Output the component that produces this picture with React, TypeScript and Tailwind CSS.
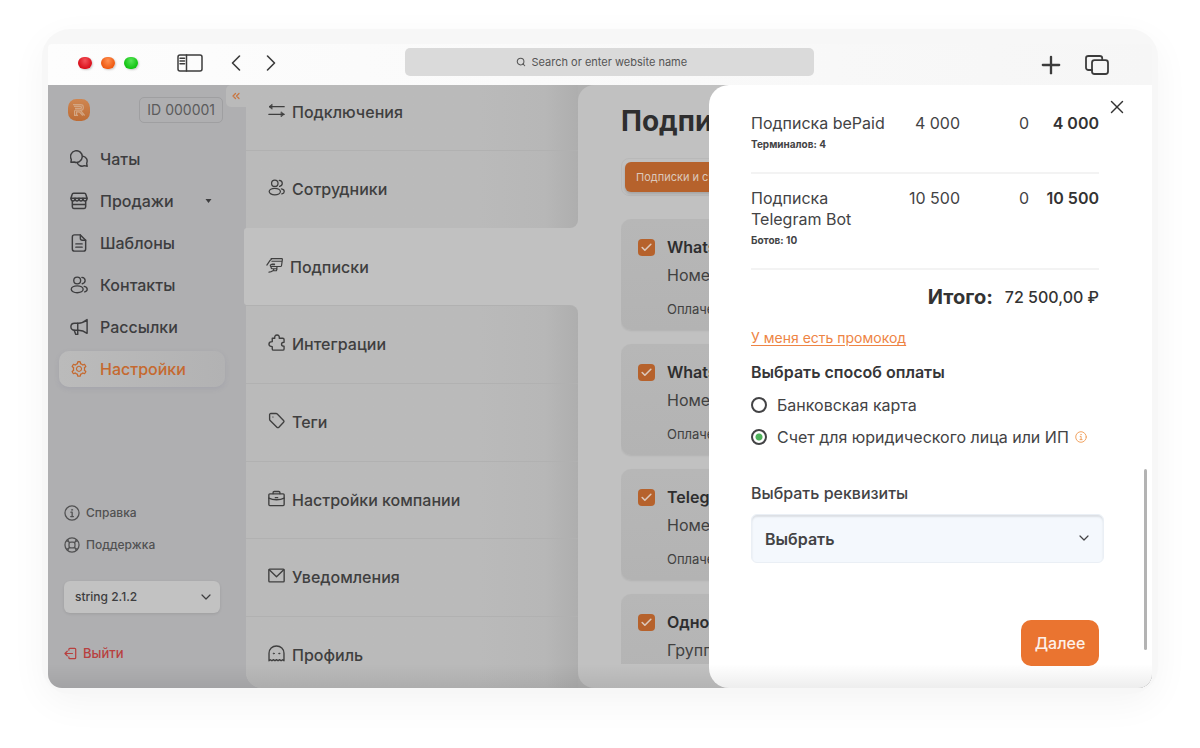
import React from "react";
import { ChevronLeft, ChevronRight, ChevronDown, Plus, X, ChevronsLeft, Check, Search } from "lucide-react";
import { AiOutlineSetting } from "react-icons/ai";

type IconProps = { className?: string };

const Line = ({
  className,
  strokeWidth = 1.6,
  viewBox = "0 0 20 20",
  children,
}: IconProps & { strokeWidth?: number; viewBox?: string; children: React.ReactNode }) => (
  <svg
    className={className}
    viewBox={viewBox}
    fill="none"
    stroke="currentColor"
    strokeWidth={strokeWidth}
    strokeLinecap="round"
    strokeLinejoin="round"
    aria-hidden="true"
  >
    {children}
  </svg>
);

const ChatsIcon = ({ className }: IconProps) => (
  <Line className={className}>
    <path d="M1 13.600l.5-3A6.500 6.500 0 1 1 4.600 13.300z" />
    <path d="M14.200 6.800a5.600 5.600 0 0 1 4.300 7.900l.6 3.400-3.200-.7A5.700 5.700 0 0 1 8 14" />
  </Line>
);

const StoreIcon = ({ className }: IconProps) => (
  <Line className={className} strokeWidth={1.7}>
    <path d="M4 1.500h12c.9 0 1.500.5 1.700 1.300l1.200 4.200H1.100l1.200-4.200C2.500 2 3.100 1.500 4 1.500z" />
    <path d="M1.100 7c0 4 4.500 4 4.500 0 0 4 4.400 4 4.400 0 0 4 4.400 4 4.400 0 0 4 4.500 4 4.500 0" />
    <path d="M2.600 10.500v6c0 1 .6 1.900 1.600 1.900h11.600c1 0 1.600-.9 1.600-1.900v-6M3 14h14" />
  </Line>
);

const DocumentIcon = ({ className }: IconProps) => (
  <Line className={className}>
    <path d="M11.500 1H5C3.600 1 2.600 2 2.600 3.400v13.200C2.600 18 3.600 19 5 19h10c1.400 0 2.400-1 2.400-2.400V7z" />
    <path d="M11.500 1v3.800c0 1.300.9 2.200 2.200 2.200h3.700M6.500 11h7M6.500 14.600h7" />
  </Line>
);

const UsersIcon = ({ className }: IconProps) => (
  <Line className={className} strokeWidth={1.5}>
    <circle cx="8" cy="5" r="3.800" />
    <ellipse cx="8" cy="14.800" rx="6.600" ry="3.800" />
    <path d="M13.200 1.600c2.200.2 3.600 1.600 3.600 3.500s-1.300 3.200-3.200 3.500M15.800 11.600c2.100.4 3.300 1.500 3.300 3s-1 2.500-2.800 3" />
  </Line>
);

const MegaphoneIcon = ({ className }: IconProps) => (
  <Line className={className}>
    <path d="M19 1.800v15.200c-3-2.200-6-3.400-9.600-3.400H5C2.600 13.600 1 12 1 9.700S2.600 5.800 5 5.800h4.400c3.600 0 6.600-1.500 9.600-4z" />
    <path d="M8.600 5.800v12.400H6.400l-1.800-4.600" />
  </Line>
);

const SwapIcon = ({ className }: IconProps) => (
  <Line className={className}>
    <path d="M19 5.500H2M19 14.500H1" />
    <path d="M4.500 2.800 1.200 5.500l3.300 2.700zM15.700 11.800l3.300 2.700-3.300 2.700z" fill="currentColor" strokeWidth={0.8} />
  </Line>
);

const CardHandIcon = ({ className }: IconProps) => (
  <Line className={className} strokeWidth={1.4}>
    <path d="M6 2h12.500c.5 0 .8.300.8.800l-1 7.200c-.1.700-.6 1.200-1.300 1.200h-4.600M7 5h12M7 8.200h3M1 9.500l4-5.800 1.200-.7" />
    <path d="M12.400 11.200H6.200C4.600 11.200 4.700 9 6.200 9H10M7 11.200c-1.700.300-1.300 2.600.5 2.600h5l.6-2.600M9 13.800v2.400h3.200l.8-2.400M3.500 17.800c2 0 3-.4 4.500-1.600" />
  </Line>
);

const PuzzleIcon = ({ className }: IconProps) => (
  <Line className={className}>
    <path d="M5 5h3c-.5-2.200.6-3.800 2.600-3.800S13.700 2.800 13.200 5h4.200c.9 0 1.500.6 1.500 1.500v3.200c-2 .1-3 1-3 2.300s1 2.300 3 2.300v3.200c0 .8-.6 1.400-1.500 1.400H6.500c-.9 0-1.500-.6-1.500-1.400v-2.600c-2.400 0-3.900-1.100-3.900-2.900S2.600 9 5 9z" />
  </Line>
);

const TagIcon = ({ className }: IconProps) => (
  <Line className={className}>
    <path d="M3.300 1.800h6.200c.6 0 1 .2 1.400.6l7.400 7.500c.7.700.7 1.500 0 2.200l-5.500 5.800c-.7.700-1.600.7-2.300 0l-8-8c-.4-.4-.6-.9-.6-1.400V3.200c0-.8.600-1.400 1.400-1.400z" />
    <path d="M5.600 5.800h.4" strokeWidth={1.200} />
  </Line>
);

const BriefcaseIcon = ({ className }: IconProps) => (
  <Line className={className}>
    <rect x="1" y="4.500" width="18" height="13.800" rx="1.200" />
    <path d="M6 4.300V3c0-.8.500-1.300 1.300-1.300h5.400c.8 0 1.300.5 1.300 1.300v1.300M1 9.500c5 2.600 13 2.600 18 0M8.600 9h2.800" />
  </Line>
);

const MailIcon = ({ className }: IconProps) => (
  <Line className={className}>
    <rect x="1" y="2.500" width="18" height="15" rx="1" />
    <path d="M1.500 3.200 10 11.500l8.500-8.300" />
  </Line>
);

const GhostIcon = ({ className }: IconProps) => (
  <Line className={className}>
    <path d="M1.200 18.600V9.800C1.200 4.800 5 1.200 10 1.200s8.800 3.600 8.800 8.600v8.800l-1.700-1.200-1.700 1.200-1.800-1.400-1.800 1.400-1.800-1.400-1.800 1.400-1.800-1.400-1.800 1.400-1.700-1.200z" />
    <circle cx="6.800" cy="10" r=".7" fill="currentColor" strokeWidth={0.8} />
    <circle cx="13.200" cy="10" r=".7" fill="currentColor" strokeWidth={0.8} />
  </Line>
);

const InfoIcon = ({ className }: IconProps) => (
  <Line className={className}>
    <circle cx="10" cy="10" r="8.800" />
    <circle cx="10" cy="6" r=".8" fill="currentColor" strokeWidth={0.6} />
    <path d="M8.600 9h1.600v5.200M8.400 14.400h3.400" />
  </Line>
);

const SupportIcon = ({ className }: IconProps) => (
  <Line className={className}>
    <circle cx="10" cy="10" r="8.800" />
    <rect x="6.300" y="6.300" width="7.400" height="7.400" rx="2.400" />
    <path d="M6.800 6.800 4.600 3.300M6.800 6.800 3.300 4.600M13.200 6.800l2.200-3.500M13.200 6.800l3.500-2.200M6.800 13.200l-2.200 3.500M6.800 13.200l-3.500 2.200M13.200 13.200l2.200 3.500M13.200 13.200l3.500 2.200" strokeWidth={1.3} />
  </Line>
);

const LogoutIcon = ({ className }: IconProps) => (
  <Line className={className} strokeWidth={1.9}>
    <path d="M7.500 5V3.500c0-.8.700-1.500 1.500-1.500h7.500c.8 0 1.500.7 1.500 1.500v13c0 .8-.7 1.500-1.500 1.500H9c-.8 0-1.500-.7-1.500-1.500V15M13 10H1.500M5 6.500 1.500 10 5 13.500" />
  </Line>
);

const PanelIcon = ({ className }: IconProps) => (
  <Line className={className} viewBox="0 0 26 18" strokeWidth={1.5}>
    <rect x="1" y="1" width="24" height="16" rx="2" />
    <path d="M9.500 1v16M3 4.300h4.500M3 7h4.500M3 9.700h4.500" />
  </Line>
);

const TabsIcon = ({ className }: IconProps) => (
  <Line className={className} viewBox="0 0 24 20" strokeWidth={1.8}>
    <rect x="7" y="5.200" width="16" height="13.800" rx="2.500" />
    <path d="M7 15H3.500C2 15 1 14 1 12.800V3.200C1 2 2 1 3.500 1h11.300c1.400 0 2.300.8 2.400 2v2" />
  </Line>
);

const Logo = () => (
  <svg className="size-[22px]" viewBox="0 0 22 22" role="img" aria-label="Логотип">
    <defs>
      <linearGradient id="brand" x1="0" y1="0" x2="0" y2="1">
        <stop offset="0" stopColor="#cf8651" />
        <stop offset="1" stopColor="#bd6c35" />
      </linearGradient>
    </defs>
    <rect width="22" height="22" rx="8.500" fill="url(#brand)" />
    <g fill="none" stroke="#d3a582" strokeWidth="1.200">
      <path d="M5 5.600h7.600c3.700 0 3.700 5.600 0 5.600H7M6 7.400h6.500c1.400 0 1.400 2 0 2H7M6.600 16.500v-5.300M8.600 16.500v-3.600h2.800l3.400 3.600M12.600 11.600l4 4.900M6 16.400h4" />
    </g>
  </svg>
);

const navItems = [
  { label: "Чаты", Icon: ChatsIcon },
  { label: "Продажи", Icon: StoreIcon, caret: true },
  { label: "Шаблоны", Icon: DocumentIcon },
  { label: "Контакты", Icon: UsersIcon },
  { label: "Рассылки", Icon: MegaphoneIcon },
  { label: "Настройки", Icon: AiOutlineSetting, active: true },
];

const settingsItems = [
  { label: "Подключения", Icon: SwapIcon, row: "pt-[15px]" },
  { label: "Сотрудники", Icon: UsersIcon, row: "pt-[26px] rounded-br-lg border-t" },
  { label: "Подписки", Icon: CardHandIcon, active: true },
  { label: "Интеграции", Icon: PuzzleIcon, row: "pt-[26px] rounded-tr-lg border-t" },
  { label: "Теги", Icon: TagIcon, row: "pt-[26px] border-t" },
  { label: "Настройки компании", Icon: BriefcaseIcon, row: "pt-[26px] border-t" },
  { label: "Уведомления", Icon: MailIcon, row: "pt-[26px] border-t" },
  { label: "Профиль", Icon: GhostIcon, row: "pt-[26px] rounded-bl-[16px] border-t" },
];

const cards = [
  { title: "WhatsApp", line: "Номер", paid: "Оплачено" },
  { title: "WhatsApp", line: "Номер", paid: "Оплачено" },
  { title: "Telegram", line: "Номер", paid: "Оплачено" },
  { title: "Одноклассники", line: "Группа" },
];

const orderRows = [
  { name: "Подписка bePaid", note: "Терминалов: 4", price: "4 000", discount: "0", total: "4 000" },
  { name: "Подписка Telegram Bot", note: "Ботов: 10", price: "10 500", discount: "0", total: "10 500" },
];

function Toolbar() {
  return (
    <header className="flex h-[41px] items-center rounded-t-sm bg-linear-to-r from-[#fdfdfd] to-[#f6f6f6] pb-[5px] text-[#3c3c3c]">
      <div className="flex w-[357px] shrink-0 items-center pt-[2px] pl-[30px]">
        <div className="flex gap-[9px]">
          <span className="h-3 w-[14px] rounded-full bg-radial-[at_50%_30%] from-[#f4525a] to-[#d9101c] to-70% shadow-[1px_1px_2px_rgba(0,0,0,0.2)]" />
          <span className="h-3 w-[14px] rounded-full bg-radial-[at_50%_30%] from-[#ff9052] to-[#ee5a12] to-70% shadow-[1px_1px_2px_rgba(0,0,0,0.2)]" />
          <span className="h-3 w-[14px] rounded-full bg-radial-[at_50%_30%] from-[#58e558] to-[#12c312] to-70% shadow-[1px_1px_2px_rgba(0,0,0,0.2)]" />
        </div>
        <button aria-label="Боковая панель" className="ml-[39px]">
          <PanelIcon className="h-[18px] w-[26px]" />
        </button>
        <button aria-label="Назад" className="ml-[19px]">
          <ChevronLeft className="size-7" strokeWidth={1.4} />
        </button>
        <button aria-label="Вперёд" className="ml-[7px]">
          <ChevronRight className="size-7" strokeWidth={1.4} />
        </button>
      </div>
      <label className="flex h-7 min-w-0 flex-1 items-center justify-center gap-[6px] rounded-[5px] bg-[#dadada]">
        <Search className="size-[10px] text-[#555]" strokeWidth={2.5} />
        <input
          aria-label="Адрес"
          placeholder="Search or enter website name"
          className="w-[172px] bg-transparent text-[11px] outline-none placeholder:text-[#555]"
        />
      </label>
      <div className="flex w-[338px] shrink-0 items-center justify-end gap-[20px] pt-[6px] pr-[43px]">
        <button aria-label="Новая вкладка">
          <Plus className="size-[28px]" strokeWidth={2} />
        </button>
        <button aria-label="Вкладки">
          <TabsIcon className="h-5 w-6" />
        </button>
      </div>
    </header>
  );
}

function Sidebar() {
  return (
    <aside className="flex w-[198px] shrink-0 flex-col text-[#3d3d3f]">
      <div className="flex items-start justify-between pl-5">
        <div className="flex flex-1 items-center justify-between pt-3 pr-[3px]">
          <Logo />
          <span className="rounded-[5px] border border-[#9f9fa1] px-[7px] py-[2px] text-sm leading-5 text-[#5b5b5c]">
            ID 000001
          </span>
        </div>
        <button
          aria-label="Свернуть меню"
          className="flex h-[22px] w-5 items-center justify-center rounded-l-[5px] bg-[#bababa] text-[#c97641]"
        >
          <ChevronsLeft className="size-3" strokeWidth={2.5} />
        </button>
      </div>
      <nav className="mt-[18px] flex flex-col gap-[6px] pr-[21px] pl-[11px]">
        {navItems.map(({ label, Icon, caret, active }) => (
          <a
            key={label}
            href="#"
            className={
              active
                ? "flex h-9 items-center gap-3 rounded-[10px] bg-linear-to-r from-[#bbbbbb] to-[#b2b2b3] pl-[11px] font-medium text-[#c5692f] shadow-[0_2px_5px_rgba(110,110,140,0.15)]"
                : "flex h-9 items-center gap-3 pl-[11px] font-medium"
            }
          >
            <Icon className="size-[18px] shrink-0" />
            {label}
            {caret && (
              <svg className="ml-auto mr-[13px] h-1 w-[7px]" viewBox="0 0 7 4" aria-hidden="true">
                <path d="M.5 0h6L3.500 4z" fill="currentColor" />
              </svg>
            )}
          </a>
        ))}
      </nav>
      <div className="mt-auto flex flex-col items-start pl-4 text-xs font-medium">
        <a href="#" className="flex items-center gap-[6px] text-[#515152]">
          <InfoIcon className="size-4" />
          Справка
        </a>
        <a href="#" className="mt-4 flex items-center gap-[6px] text-[#515152]">
          <SupportIcon className="size-4" />
          Поддержка
        </a>
        <div className="relative mt-7 w-[156px]">
          <select
            aria-label="Версия"
            className="h-8 w-full appearance-none rounded-md bg-[#c2c2c2] px-[11px] shadow-[0_1px_3px_rgba(0,0,0,0.1)]"
          >
            <option>string 2.1.2</option>
          </select>
          <ChevronDown className="pointer-events-none absolute top-2 right-[6px] size-4" strokeWidth={1.8} />
        </div>
        <a href="#" className="mt-8 mb-[27px] flex items-center gap-[6px] text-[13px] leading-4 text-[#b8403f]">
          <LogoutIcon className="size-[13px]" />
          Выйти
        </a>
      </div>
    </aside>
  );
}

function SettingsMenu() {
  return (
    <nav className="grid w-[332px] shrink-0 grid-rows-[65px_repeat(6,1fr)_72px] rounded-bl-[16px] bg-[#c1c1c1] font-medium text-[#3f3f3f]">
      {settingsItems.map(({ label, Icon, row, active }) => (
        <a
          key={label}
          href="#"
          className={
            active
              ? "-ml-[2px] flex items-start gap-[7px] rounded-l-[3px] bg-[#c1c1c1] pt-[27px] pl-[22px]"
              : `flex items-start gap-[7px] border-[#b1b1b1] bg-linear-to-r from-[#bababa] from-70% via-[#b7b7b7] via-90% to-[#aeaeae] pl-[22px] ${row}`
          }
        >
          <Icon className="mt-[2px] size-[17px] shrink-0" />
          <span className="leading-6">{label}</span>
        </a>
      ))}
    </nav>
  );
}

function Subscriptions() {
  return (
    <div className="flex min-w-0 flex-1 bg-[#b0b0b0]">
      <main className="flex min-w-0 flex-1 flex-col overflow-hidden rounded-l-[16px] bg-[#c1c1c1] pt-[18px] pr-6 pb-6 pl-[43px] text-[#2e2e2f]">
        <h1 className="text-[28px] leading-9 font-bold">Подписки</h1>
        <div className="mt-[19px] flex shrink-0 rounded-lg border border-[#b9b9b9] p-[3px]">
          <button className="h-[30px] rounded-md bg-[#b6622c] px-[11px] text-[11px] text-[#dcc8bb] shadow-[0_2px_3px_rgba(0,0,0,0.15)]">
            Подписки и счета
          </button>
        </div>
        <div className="mt-[23px] flex min-h-0 flex-1 flex-col gap-[14px] overflow-hidden">
          {cards.map((card, i) => (
            <label
              key={i}
              className="flex h-[111px] shrink-0 gap-3 rounded-[10px] bg-linear-to-b from-[#b7b7b7] to-[#b3b3b3] px-[17px] pt-4 shadow-[0_1px_2px_rgba(0,0,0,0.08)]"
            >
              <span className="relative mt-1 size-[17px] shrink-0">
                <input
                  type="checkbox"
                  defaultChecked
                  className="block size-[17px] appearance-none rounded-[4px] bg-[#b6622c]"
                />
                <Check
                  className="pointer-events-none absolute top-[2px] left-[2px] size-[13px] text-[#dcc8bb]"
                  strokeWidth={3}
                />
              </span>
              <span className="flex flex-col">
                <span className="leading-6 font-semibold">{card.title}</span>
                <span className="mt-1 leading-6 text-[#414141]">{card.line}</span>
                {card.paid && <span className="mt-3 text-[13px] leading-5 text-[#414141]">{card.paid}</span>}
              </span>
            </label>
          ))}
        </div>
      </main>
    </div>
  );
}

function PaymentDrawer() {
  return (
    <section className="absolute inset-y-0 right-0 flex w-[443px] flex-col rounded-l-[20px] bg-white pt-[14px] pr-[53px] pl-[42px] text-[#434345]">
      <button aria-label="Закрыть" className="absolute top-[11px] right-[24px] text-[#333]">
        <X className="size-[22px]" strokeWidth={1.6} />
      </button>
      <table className="w-full table-fixed">
        <tbody>
          {orderRows.map((r) => (
            <tr key={r.name} className="border-b-2 border-[#f3f3f3] align-top leading-[21px]">
              <td className="w-[139px] pt-[14px] pb-[17px]">
                {r.name}
                <div className="text-[10px] leading-[21px] font-bold">{r.note}</div>
              </td>
              <td className="w-[70px] pt-[14px] text-right">{r.price}</td>
              <td className="w-[69px] pt-[14px] text-right">{r.discount}</td>
              <td className="pt-[14px] text-right font-semibold text-[#333]">{r.total}</td>
            </tr>
          ))}
        </tbody>
      </table>
      <div className="mt-[13px] flex items-center justify-end gap-3 text-[#333]">
        <span className="text-xl leading-7 font-bold">Итого:</span>
        <span className="font-medium">72 500,00 ₽</span>
      </div>
      <a href="#" className="mt-[15px] self-start text-sm leading-6 text-[#ee8444] underline underline-offset-2">
        У меня есть промокод
      </a>
      <fieldset className="mt-[10px] flex flex-col gap-2">
        <legend className="mb-[9px] leading-6 font-semibold text-[#363638]">Выбрать способ оплаты</legend>
        <label className="flex items-center gap-[10px] leading-6">
          <input
            type="radio"
            name="method"
            className="size-4 appearance-none rounded-full border-2 border-[#434345]"
          />
          Банковская карта
        </label>
        <label className="flex items-center gap-[10px] leading-6">
          <input
            type="radio"
            name="method"
            defaultChecked
            className="size-4 shrink-0 appearance-none rounded-full border-2 border-[#434345] bg-[radial-gradient(circle,#4fb35c_3px,transparent_4px)]"
          />
          <span className="whitespace-nowrap">Счет для юридического лица или ИП</span>
          <InfoIcon className="-ml-1 size-3 shrink-0 text-[#f0a05c]" />
        </label>
      </fieldset>
      <label htmlFor="requisites" className="mt-8 leading-6 font-medium">
        Выбрать реквизиты
      </label>
      <div className="relative mt-[9px] -mr-[5px]">
        <select
          id="requisites"
          className="h-[49px] w-full appearance-none rounded-md border border-[#eaeff5] bg-[#f4f8fd] px-[13px] font-semibold shadow-[inset_0_2px_2px_rgba(0,0,0,0.1)]"
        >
          <option>Выбрать</option>
        </select>
        <ChevronDown className="pointer-events-none absolute top-4 right-3 size-4" strokeWidth={1.8} />
      </div>
      <button className="mt-auto mb-[22px] h-[46px] w-[78px] shrink-0 self-end rounded-[10px] bg-[#ea7430] font-medium text-[#fdf0e8]">
        Далее
      </button>
      <span className="absolute right-[5px] bottom-[38px] h-[181px] w-[3px] rounded-full bg-[#b3b3b3]" />
    </section>
  );
}

export default function App() {
  return (
    <div className="flex h-screen min-h-[720px] flex-col bg-white px-[42px] pt-[29px] pb-[54px] font-['Inter',sans-serif] text-base">
      <div className="flex min-h-0 flex-1 flex-col rounded-[28px] bg-[#f7f7f7] px-[6px] pt-[15px] pb-[6px] shadow-[0_10px_36px_rgba(0,0,0,0.045)]">
        <Toolbar />
        <div className="relative flex min-h-0 flex-1 overflow-hidden rounded-b-[14px] bg-[#afafb1]">
          <Sidebar />
          <SettingsMenu />
          <Subscriptions />
          <PaymentDrawer />
          <div className="pointer-events-none absolute inset-x-0 bottom-0 h-6 bg-linear-to-b from-transparent to-black/7" />
        </div>
      </div>
    </div>
  );
}
